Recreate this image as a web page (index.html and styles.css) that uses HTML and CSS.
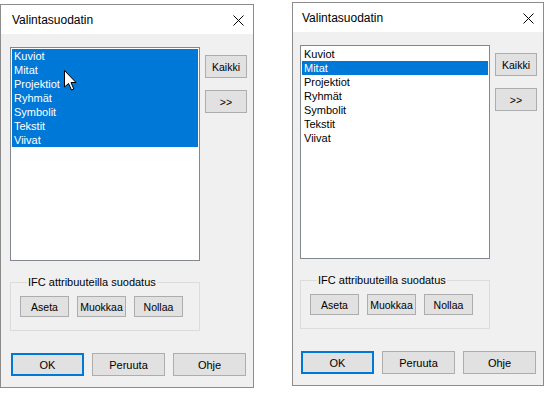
FILE: index.html
```html
<!DOCTYPE html>
<html lang="fi">
<head>
    <meta charset="UTF-8">
    <meta name="viewport" content="width=device-width, initial-scale=1.0">
    <title>Valintasuodatin</title>
    <link rel="stylesheet" href="styles.css">
</head>
<body>
    <div class="screen">

        <!-- all items selected, cursor over the list -->
        <div class="dialog dialog-left">
            <div class="titlebar">
                <span class="title">Valintasuodatin</span>
                <svg class="close" width="11" height="11" viewBox="0 0 11 11"><path d="M0.5 0.5 L10.5 10.5 M10.5 0.5 L0.5 10.5" stroke="#000" stroke-width="1" fill="none"/></svg>
            </div>
            <div class="dialog-body">
                <div class="top-row">
                    <div class="listbox">
                        <div class="item selected">Kuviot</div>
                        <div class="item selected">Mitat</div>
                        <div class="item selected">Projektiot</div>
                        <div class="item selected">Ryhmät</div>
                        <div class="item selected">Symbolit</div>
                        <div class="item selected">Tekstit</div>
                        <div class="item selected">Viivat</div>
                        <svg class="cursor" width="13" height="21" viewBox="0 0 13 21"><polygon points="0.5,0.5 0.5,17 4.5,13.5 7.5,20 9.8,19 7,12.5 12,12.5" fill="#fff" stroke="#000" stroke-width="1"/></svg>
                    </div>
                    <div class="side-buttons">
                        <button class="btn btn-side">Kaikki</button>
                        <button class="btn btn-side">&gt;&gt;</button>
                    </div>
                </div>
                <div class="group">
                    <div class="group-label">IFC attribuuteilla suodatus</div>
                    <div class="group-buttons">
                        <button class="btn btn-small">Aseta</button>
                        <button class="btn btn-small">Muokkaa</button>
                        <button class="btn btn-small">Nollaa</button>
                    </div>
                </div>
                <div class="footer">
                    <button class="btn btn-footer btn-default">OK</button>
                    <button class="btn btn-footer">Peruuta</button>
                    <button class="btn btn-footer">Ohje</button>
                </div>
            </div>
        </div>

        <!-- only Mitat selected -->
        <div class="dialog dialog-right">
            <div class="titlebar">
                <span class="title">Valintasuodatin</span>
                <svg class="close" width="11" height="11" viewBox="0 0 11 11"><path d="M0.5 0.5 L10.5 10.5 M10.5 0.5 L0.5 10.5" stroke="#000" stroke-width="1" fill="none"/></svg>
            </div>
            <div class="dialog-body">
                <div class="top-row">
                    <div class="listbox">
                        <div class="item">Kuviot</div>
                        <div class="item selected">Mitat</div>
                        <div class="item">Projektiot</div>
                        <div class="item">Ryhmät</div>
                        <div class="item">Symbolit</div>
                        <div class="item">Tekstit</div>
                        <div class="item">Viivat</div>
                    </div>
                    <div class="side-buttons">
                        <button class="btn btn-side">Kaikki</button>
                        <button class="btn btn-side">&gt;&gt;</button>
                    </div>
                </div>
                <div class="group">
                    <div class="group-label">IFC attribuuteilla suodatus</div>
                    <div class="group-buttons">
                        <button class="btn btn-small">Aseta</button>
                        <button class="btn btn-small">Muokkaa</button>
                        <button class="btn btn-small">Nollaa</button>
                    </div>
                </div>
                <div class="footer">
                    <button class="btn btn-footer btn-default">OK</button>
                    <button class="btn btn-footer">Peruuta</button>
                    <button class="btn btn-footer">Ohje</button>
                </div>
            </div>
        </div>

    </div>
</body>
</html>
```

FILE: styles.css
```css
body {
    margin: 0;
    background-color: #ffffff;
    font-family: "Liberation Sans", Arial, sans-serif;
    color: #000000;
}

.screen {
    display: flex;
    align-items: flex-start;
    width: 550px;
    height: 393px;
    overflow: hidden;
}

.dialog {
    box-sizing: border-box;
    border: 1px solid #8c8c8c;
    background-color: #f0f0f0;
}
.dialog-left {
    width: 254px;
    margin-top: 4px;
}
.dialog-right {
    width: 252px;
    margin-top: 2px;
    margin-left: 38px;
}

.titlebar {
    height: 29px;
    background-color: #ffffff;
    display: flex;
    align-items: center;
    justify-content: space-between;
    padding: 0 9px 0 11px;
}
.dialog-right .titlebar {
    padding-left: 9px;
}
.title {
    font-size: 12px;
    padding-top: 1px;
}
.close {
    display: block;
    margin-top: 1px;
}

.dialog-body {
    padding: 13px 0 11px 9px;
}
.dialog-right .dialog-body {
    padding-left: 7px;
}

.top-row {
    display: flex;
    align-items: flex-start;
}

.listbox {
    position: relative;
    box-sizing: border-box;
    width: 190px;
    height: 214px;
    border: 1px solid #828790;
    background-color: #ffffff;
    padding: 1px;
}
.item {
    height: 14px;
    line-height: 14px;
    padding-left: 2px;
    font-size: 11px;
}
.selected {
    background-color: #0078d7;
    color: #ffffff;
}
.cursor {
    position: absolute;
    left: 53px;
    top: 22px;
}

.side-buttons {
    display: flex;
    flex-direction: column;
    gap: 12px;
    margin: 8px 0 0 5px;
}

.btn {
    box-sizing: border-box;
    padding: 0;
    font-family: "Liberation Sans", Arial, sans-serif;
    font-size: 10.5px;
    color: #000000;
    background-color: #e1e1e1;
    border: 1px solid #adadad;
}
.btn-side {
    width: 42px;
    height: 23px;
}
.btn-small {
    width: 49px;
    height: 21px;
}
.btn-footer {
    width: 73px;
    height: 23px;
    font-size: 11px;
}
.btn-default {
    border: 2px solid #0078d7;
}

.group {
    box-sizing: border-box;
    width: 190px;
    margin-top: 21px;
    border: 1px solid #dcdcdc;
    padding: 0 0 13px 9px;
}
.group-label {
    width: fit-content;
    margin: -7px 0 0 7px;
    padding: 0 1px;
    line-height: 13px;
    font-size: 11px;
    background-color: #f0f0f0;
}
.group-buttons {
    display: flex;
    gap: 8px;
    margin-top: 7px;
}

.footer {
    display: flex;
    gap: 8px;
    margin: 22px 0 0 1px;
}
```
